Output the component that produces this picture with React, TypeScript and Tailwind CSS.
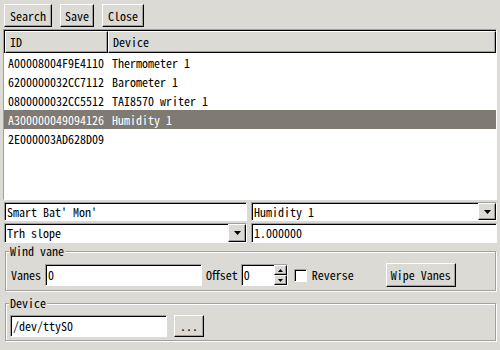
import React from 'react';

const rows = [
  { id: 'A00008004F9E4110', device: 'Thermometer 1' },
  { id: '6200000032CC7112', device: 'Barometer 1' },
  { id: '0800000032CC5512', device: 'TAI8570 writer 1' },
  { id: 'A300000049094126', device: 'Humidity 1', selected: true },
  { id: '2E000003AD628D09', device: '' },
];

const raised =
  'border border-t-white border-l-white border-b-black border-r-black shadow-[inset_-1px_-1px_0_#a0a0a0] bg-[#dcdad5]';
const sunken =
  'border border-t-[#a0a0a0] border-l-[#a0a0a0] border-b-white border-r-white shadow-[inset_1px_1px_0_#000] bg-white';

const Button = ({ children, className = '' }: { children: React.ReactNode; className?: string }) => (
  <button className={`flex items-center justify-center leading-none ${raised} ${className}`}>{children}</button>
);

const DownArrow = () => (
  <svg width="7" height="4" viewBox="0 0 7 4">
    <polygon points="0,0 7,0 3.5,4" fill="#000" />
  </svg>
);

const Combo = ({ value, className = '' }: { value: string; className?: string }) => (
  <div className={`flex ${sunken} ${className}`}>
    <div className="flex-1 flex items-center pl-[2px]">{value}</div>
    <div className={`w-[18px] flex items-center justify-center ${raised}`}>
      <DownArrow />
    </div>
  </div>
);

const Field = ({ value, className = '' }: { value: string; className?: string }) => (
  <div className={`flex items-center pl-[2px] ${sunken} ${className}`}>{value}</div>
);

const Group = ({ title, children }: { title: string; children: React.ReactNode }) => (
  <fieldset className="ml-[5px] mr-[4px] border border-[#a0a0a0] shadow-[inset_1px_1px_0_#fff,1px_1px_0_#fff]">
    <legend className="ml-[3px] px-[1px] leading-[14px] bg-[#dcdad5]">{title}</legend>
    {children}
  </fieldset>
);

export default function App() {
  return (
    <div className="w-[500px] h-[350px] overflow-hidden bg-[#dcdad5] text-black text-[12px] font-['Noto_Sans_CJK_JP',sans-serif] [font-feature-settings:'hwid']">
      <div className="flex gap-[8px] pt-[4px] pl-[4px]">
        <Button className="w-[48px] h-[23px]">Search</Button>
        <Button className="w-[34px] h-[23px]">Save</Button>
        <Button className="w-[42px] h-[23px]">Close</Button>
      </div>

      <div className="mt-[2px] ml-[3px] mr-[3px] h-[171px] border border-t-[#a0a0a0] border-l-[#a0a0a0] border-b-white border-r-white bg-white">
        <div className="flex h-[23px] border-t border-l border-black">
          <div className={`w-[103px] flex items-center pl-[4px] ${raised}`}>ID</div>
          <div className={`flex-1 flex items-center pl-[4px] ${raised}`}>Device</div>
        </div>
        {rows.map((r) => (
          <div
            key={r.id}
            className={`flex h-[19px] items-center ${r.selected ? 'bg-[#7f7a72] text-white' : ''}`}
          >
            <div className="w-[104px] pl-[4px]">{r.id}</div>
            <div className="flex-1 pl-[4px]">{r.device}</div>
          </div>
        ))}
      </div>

      <div className="mt-[2px] ml-[4px] mr-[3px] h-[19px] flex gap-[4px]">
        <Field value="Smart Bat' Mon'" className="w-[243px]" />
        <Combo value="Humidity 1" className="flex-1" />
      </div>

      <div className="mt-[2px] ml-[4px] mr-[3px] h-[20px] flex gap-[4px]">
        <Combo value="Trh slope" className="w-[243px]" />
        <Field value="1.000000" className="flex-1" />
      </div>

      <div className="mt-[1px]">
        <Group title="Wind vane">
          <div className="flex items-center pt-[5px] pb-[3px] pl-[5px]">
            <span>Vanes</span>
            <Field value="0" className="ml-[4px] w-[157px] h-[22px]" />
            <span className="ml-[4px]">Offset</span>
            <div className={`ml-[3px] w-[47px] h-[22px] flex ${sunken}`}>
              <div className="flex-1 flex items-center pl-[2px]">0</div>
              <div className="w-[13px] flex flex-col">
                <div className={`flex-1 flex items-center justify-center ${raised}`}>
                  <svg width="5" height="3" viewBox="0 0 5 3">
                    <polygon points="0,3 5,3 2.5,0" fill="#000" />
                  </svg>
                </div>
                <div className={`flex-1 flex items-center justify-center ${raised}`}>
                  <svg width="5" height="3" viewBox="0 0 5 3">
                    <polygon points="0,0 5,0 2.5,3" fill="#000" />
                  </svg>
                </div>
              </div>
            </div>
            <div className={`ml-[6px] w-[13px] h-[13px] ${sunken}`} />
            <span className="ml-[5px]">Reverse</span>
            <Button className="ml-[32px] w-[70px] h-[24px]">Wipe Vanes</Button>
          </div>
        </Group>
      </div>

      <div className="mt-[5px]">
        <Group title="Device">
          <div className="flex items-center pt-[5px] pb-[3px] pl-[4px]">
            <Field value="/dev/ttyS0" className="w-[157px] h-[22px]" />
            <Button className="ml-[7px] w-[30px] h-[22px]">...</Button>
          </div>
        </Group>
      </div>
    </div>
  );
}
